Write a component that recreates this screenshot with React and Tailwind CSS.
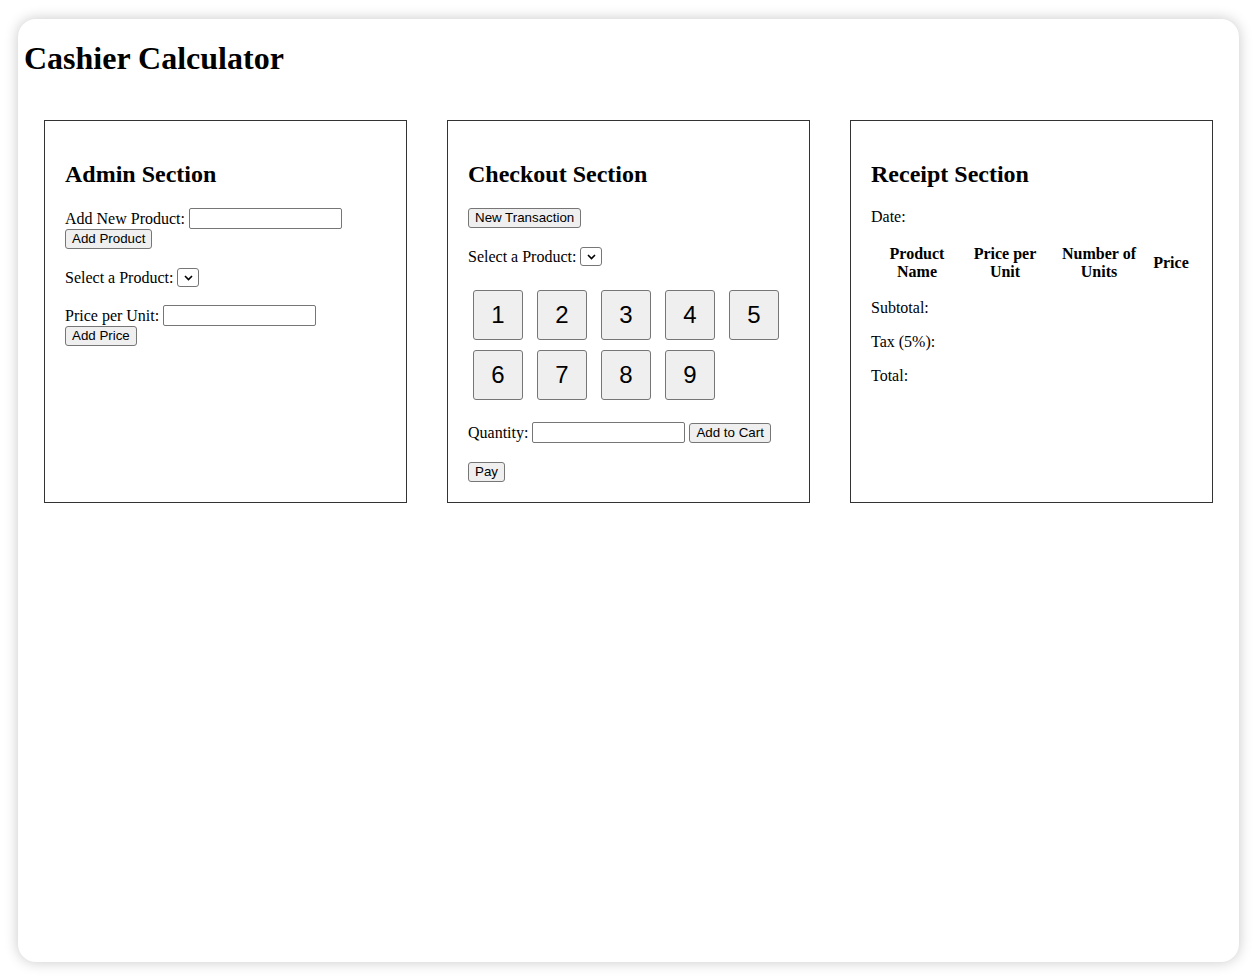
import React from "react";

const serif = { fontFamily: '"Liberation Serif", "Times New Roman", serif' };

const Btn = ({ children, className = "" }) => (
  <button
    className={`inline-flex items-center justify-center h-[20px] px-[6px] bg-[#efefef] border border-[#767676] rounded-[3px] text-[13.33px] leading-none text-black font-['Liberation_Sans',Arial,sans-serif] ${className}`}
  >
    {children}
  </button>
);

const TextInput = () => (
  <input
    type="text"
    className="w-[153px] h-[21px] border border-[#767676] rounded-[2px] bg-white px-1 text-[13px] align-middle"
  />
);

const Select = () => (
  <span className="inline-flex items-center justify-center w-[22px] h-[19px] border border-[#767676] rounded-[3px] bg-white align-middle">
    <svg width="9" height="6" viewBox="0 0 9 6">
      <path d="M1 1l3.5 3.5L8 1" fill="none" stroke="#000" strokeWidth="1.6" />
    </svg>
  </span>
);

const Heading = ({ children }) => (
  <h2 className="mt-[20px] mb-[20px] text-[24px] leading-[27px] font-bold">{children}</h2>
);

const Box = ({ children }) => (
  <div className="flex-1 basis-0 min-w-0 m-[20px] border border-[#333] p-[20px]">{children}</div>
);

export default function App() {
  const keys = [1, 2, 3, 4, 5, 6, 7, 8, 9];
  return (
    <div className="w-[1257px] h-[980px] bg-white p-[18px] pt-[19px]" style={serif}>
      <div className="h-[943px] w-[1221px] bg-white rounded-[18px] shadow-[0_0_14px_rgba(0,0,0,0.22)] px-[6px] pt-[21px] text-black">
        <h1 className="text-[32px] leading-[37px] font-bold">Cashier Calculator</h1>

        <div className="flex items-stretch mt-[23px]">
          {/* Admin */}
          <Box>
            <Heading>Admin Section</Heading>
            <div className="flex items-center h-[21px] text-[16px]">
              <span>Add New Product:</span>
              <span className="ml-[4px] flex"><TextInput /></span>
            </div>
            <div className="flex h-[20px]">
              <Btn>Add Product</Btn>
            </div>
            <div className="flex items-center h-[19px] mt-[19px] text-[16px]">
              <span>Select a Product:</span>
              <span className="ml-[4px] flex"><Select /></span>
            </div>
            <div className="flex items-center h-[21px] mt-[18px] text-[16px]">
              <span>Price per Unit:</span>
              <span className="ml-[4px] flex"><TextInput /></span>
            </div>
            <div className="flex h-[20px]">
              <Btn>Add Price</Btn>
            </div>
          </Box>

          {/* Checkout */}
          <Box>
            <Heading>Checkout Section</Heading>
            <div className="flex h-[20px]">
              <Btn>New Transaction</Btn>
            </div>
            <div className="flex items-center h-[19px] mt-[19px] text-[16px]">
              <span>Select a Product:</span>
              <span className="ml-[4px] flex"><Select /></span>
            </div>
            <div className="flex flex-wrap gap-x-[14px] gap-y-[10px] pl-[5px] mt-[24px]">
              {keys.map((k) => (
                <button
                  key={k}
                  className="w-[50px] h-[50px] bg-[#efefef] border border-[#767676] rounded-[3px] text-[24px] leading-none font-['Liberation_Sans',Arial,sans-serif]"
                >
                  {k}
                </button>
              ))}
            </div>
            <div className="flex items-center h-[21px] mt-[22px] text-[16px]">
              <span>Quantity:</span>
              <span className="ml-[4px] flex"><TextInput /></span>
              <Btn className="ml-[4px]">Add to Cart</Btn>
            </div>
            <div className="flex h-[20px] mt-[19px]">
              <Btn>Pay</Btn>
            </div>
          </Box>

          {/* Receipt */}
          <Box>
            <Heading>Receipt Section</Heading>
            <p className="text-[16px] leading-[18px]">Date:</p>
            <table className="mt-[16px] table-fixed w-[322px] text-[16px] leading-[18px] border-separate border-spacing-[2px]">
              <thead>
                <tr>
                  <th className="w-[88px] p-[1px] font-bold text-center">Product Name</th>
                  <th className="w-[84px] p-[1px] font-bold text-center">Price per Unit</th>
                  <th className="w-[100px] p-[1px] font-bold text-center">Number of Units</th>
                  <th className="w-[40px] p-[1px] font-bold text-center">Price</th>
                </tr>
              </thead>
              <tbody></tbody>
            </table>
            <p className="mt-[15px] text-[16px] leading-[18px]">Subtotal:</p>
            <p className="mt-[16px] text-[16px] leading-[18px]">Tax (5%):</p>
            <p className="mt-[16px] text-[16px] leading-[18px]">Total:</p>
          </Box>
        </div>
      </div>
    </div>
  );
}
